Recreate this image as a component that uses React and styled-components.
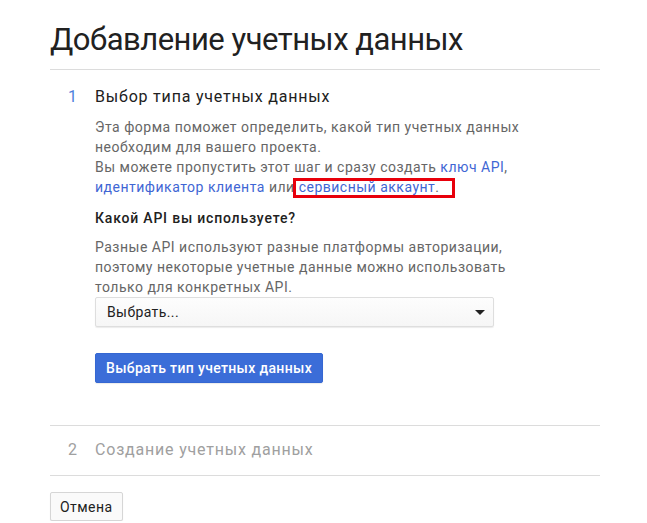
import React from 'react';
import styled, { createGlobalStyle } from 'styled-components';

const GlobalStyle = createGlobalStyle`
	body {
		margin: 0;
		background: #fff;
		font-family: Roboto, 'Liberation Sans', Arial, sans-serif;
		color: #212121;
	}
`;

const Page = styled.div`
	width: 550px;
	padding: 20px 0 0 50px;
`;

const Title = styled.h1`
	margin: 0;
	font-size: 31px;
	font-weight: 400;
	letter-spacing: -0.5px;
	line-height: 40px;
	color: #212121;
	padding-bottom: 9px;
	border-bottom: 1px solid #dcdcdc;
	white-space: nowrap;
`;

const Step = styled.section`
	border-bottom: 1px solid #dcdcdc;
	padding-bottom: ${(p) => (p.open ? '42px' : '13px')};
`;

const StepHeader = styled.div`
	display: flex;
	align-items: center;
	padding-top: ${(p) => (p.open ? '15px' : '12px')};
	font-size: 16px;
	letter-spacing: 0.8px;
	line-height: 24px;
	color: ${(p) => (p.open ? '#212121' : '#a0a0a0')};
`;

const StepNumber = styled.span`
	width: 27px;
	padding-left: 18px;
	letter-spacing: 0;
	color: ${(p) => (p.open ? '#4f7fdc' : '#a0a0a0')};
`;

const StepBody = styled.div`
	padding-left: 45px;
	display: flex;
	flex-direction: column;
	align-items: flex-start;
`;

const Text = styled.p`
	margin: ${(p) => p.top || 0}px 0 0;
	font-size: 14px;
	letter-spacing: 0.5px;
	line-height: 20px;
	color: #666;
	white-space: nowrap;
`;

const Link = styled.a`
	color: #3f66d4;
	text-decoration: none;
	cursor: pointer;
`;

const Marked = styled.span`
	position: relative;

	&::after {
		content: '';
		position: absolute;
		left: -6px;
		right: -15px;
		top: -1px;
		bottom: -3px;
		border: 3px solid #e8000b;
	}
`;

const Question = styled.h3`
	margin: 11px 0 0;
	font-size: 14px;
	font-weight: 500;
	letter-spacing: 0.8px;
	line-height: 20px;
	color: #212121;
`;

const Select = styled.div`
	box-sizing: border-box;
	width: 399px;
	height: 30px;
	display: flex;
	align-items: center;
	justify-content: space-between;
	padding: 0 8px 0 11px;
	border: 1px solid #dedede;
	border-radius: 2px;
	background: linear-gradient(#fdfdfd, #f6f6f6);
	box-shadow: 0 1px 1px rgba(0, 0, 0, 0.08);
	font-size: 14px;
	letter-spacing: 0.4px;
	color: #212121;
	cursor: pointer;
`;

const Caret = styled.span`
	width: 0;
	height: 0;
	border-left: 5px solid transparent;
	border-right: 5px solid transparent;
	border-top: 5px solid #222;
`;

const Button = styled.button`
	box-sizing: border-box;
	height: ${(p) => (p.primary ? '30px' : '29px')};
	margin-top: ${(p) => p.top || 0}px;
	padding: 0 ${(p) => (p.primary ? '10px' : '9px')};
	border: 1px solid ${(p) => (p.primary ? '#3567d2' : '#d6d6d6')};
	border-radius: 2px;
	background: ${(p) => (p.primary ? '#3b6dd8' : '#fafafa')};
	color: ${(p) => (p.primary ? '#fff' : '#212121')};
	font-family: Roboto, 'Liberation Sans', Arial, sans-serif;
	font-size: 14px;
	font-weight: ${(p) => (p.primary ? 500 : 400)};
	letter-spacing: ${(p) => (p.primary ? '0.35px' : '0.45px')};
	box-shadow: 0 1px 1px rgba(0, 0, 0, 0.08);
	cursor: pointer;
`;

export default function App() {
	return (
		<Page>
			<GlobalStyle />
			<Title>Добавление учетных данных</Title>

			<Step open>
				<StepHeader open>
					<StepNumber open>1</StepNumber>
					Выбор типа учетных данных
				</StepHeader>
				<StepBody>
					<Text top={8}>
						Эта форма поможет определить, какой тип учетных данных
						<br />
						необходим для вашего проекта.
						<br />
						Вы можете пропустить этот шаг и сразу создать{' '}
						<Link>ключ API</Link>,
						<br />
						<Link>идентификатор клиента</Link> или{' '}
						<Marked>
							<Link>сервисный аккаунт</Link>.
						</Marked>
					</Text>
					<Question>Какой API вы используете?</Question>
					<Text top={9}>
						Разные API используют разные платформы авторизации,
						<br />
						поэтому некоторые учетные данные можно использовать
						<br />
						только для конкретных API.
					</Text>
					<Select>
						Выбрать...
						<Caret />
					</Select>
					<Button primary top={26}>
						Выбрать тип учетных данных
					</Button>
				</StepBody>
			</Step>

			<Step>
				<StepHeader>
					<StepNumber>2</StepNumber>
					Создание учетных данных
				</StepHeader>
			</Step>

			<Button top={16}>Отмена</Button>
		</Page>
	);
}
